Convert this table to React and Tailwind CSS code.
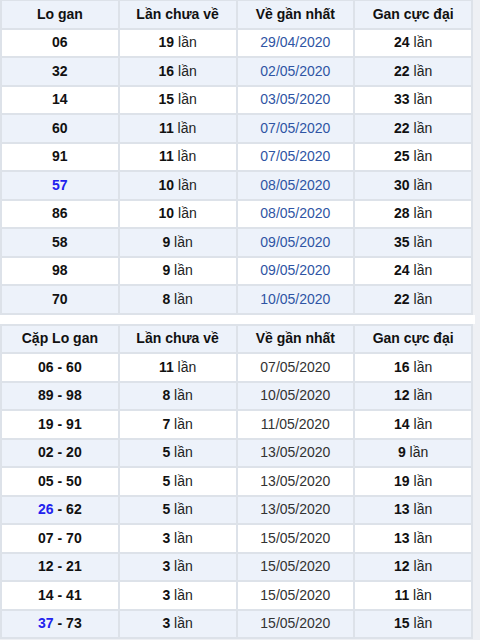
const loGan = [
  ["06", 19, "29/04/2020", 24],
  ["32", 16, "02/05/2020", 22],
  ["14", 15, "03/05/2020", 33],
  ["60", 11, "07/05/2020", 22],
  ["91", 11, "07/05/2020", 25],
  ["57", 10, "08/05/2020", 30, true],
  ["86", 10, "08/05/2020", 28],
  ["58", 9, "09/05/2020", 35],
  ["98", 9, "09/05/2020", 24],
  ["70", 8, "10/05/2020", 22],
];

const capLoGan = [
  ["06", "60", 11, "07/05/2020", 16],
  ["89", "98", 8, "10/05/2020", 12],
  ["19", "91", 7, "11/05/2020", 14],
  ["02", "20", 5, "13/05/2020", 9],
  ["05", "50", 5, "13/05/2020", 19],
  ["26", "62", 5, "13/05/2020", 13, true],
  ["07", "70", 3, "15/05/2020", 13],
  ["12", "21", 3, "15/05/2020", 12],
  ["14", "41", 3, "15/05/2020", 11],
  ["37", "73", 3, "15/05/2020", 15, true],
];

function Lan({ n }) {
  return (
    <>
      <b className="font-bold text-[#111]">{n}</b> lần
    </>
  );
}

function Header({ first }) {
  return (
    <tr>
      {[first, "Lần chưa về", "Về gần nhất", "Gan cực đại"].map((h) => (
        <th key={h} className="h-[26.5px] bg-[#edf2fa] font-bold text-[#111]">
          {h}
        </th>
      ))}
    </tr>
  );
}

function rowBg(i) {
  return i % 2 === 0 ? "bg-white" : "bg-[#edf2fa]";
}

export default function App() {
  return (
    <div
      className="w-[480px] h-[640px] overflow-hidden bg-[#eef0f4] text-[14px] text-[#222]"
      style={{ fontFamily: '"Liberation Sans", Arial, sans-serif' }}
    >
      <table className="-mt-px w-[473px] table-fixed border-separate border-spacing-[2px] bg-[#dde2e9] text-center">
        <thead>
          <Header first="Lo gan" />
        </thead>
        <tbody>
          {loGan.map(([num, miss, date, max, hl], i) => (
            <tr key={num} className={rowBg(i)}>
              <td className={`h-[26.5px] font-bold ${hl ? "text-[#2222ee]" : "text-[#111]"}`}>{num}</td>
              <td><Lan n={miss} /></td>
              <td className="text-[#2f55a4]">{date}</td>
              <td><Lan n={max} /></td>
            </tr>
          ))}
        </tbody>
      </table>

      <div className="h-[9px] w-[475px] bg-white" />

      <table className="w-[473px] table-fixed border-separate border-spacing-[2px] bg-[#dde2e9] text-center">
        <thead>
          <Header first="Cặp Lo gan" />
        </thead>
        <tbody>
          {capLoGan.map(([a, b, miss, date, max, hl], i) => (
            <tr key={a + b} className={rowBg(i)}>
              <td className="h-[26.5px] font-bold text-[#111]">
                <span className={hl ? "text-[#2222ee]" : ""}>{a}</span> - {b}
              </td>
              <td><Lan n={miss} /></td>
              <td className="text-[#333]">{date}</td>
              <td><Lan n={max} /></td>
            </tr>
          ))}
        </tbody>
      </table>
    </div>
  );
}
